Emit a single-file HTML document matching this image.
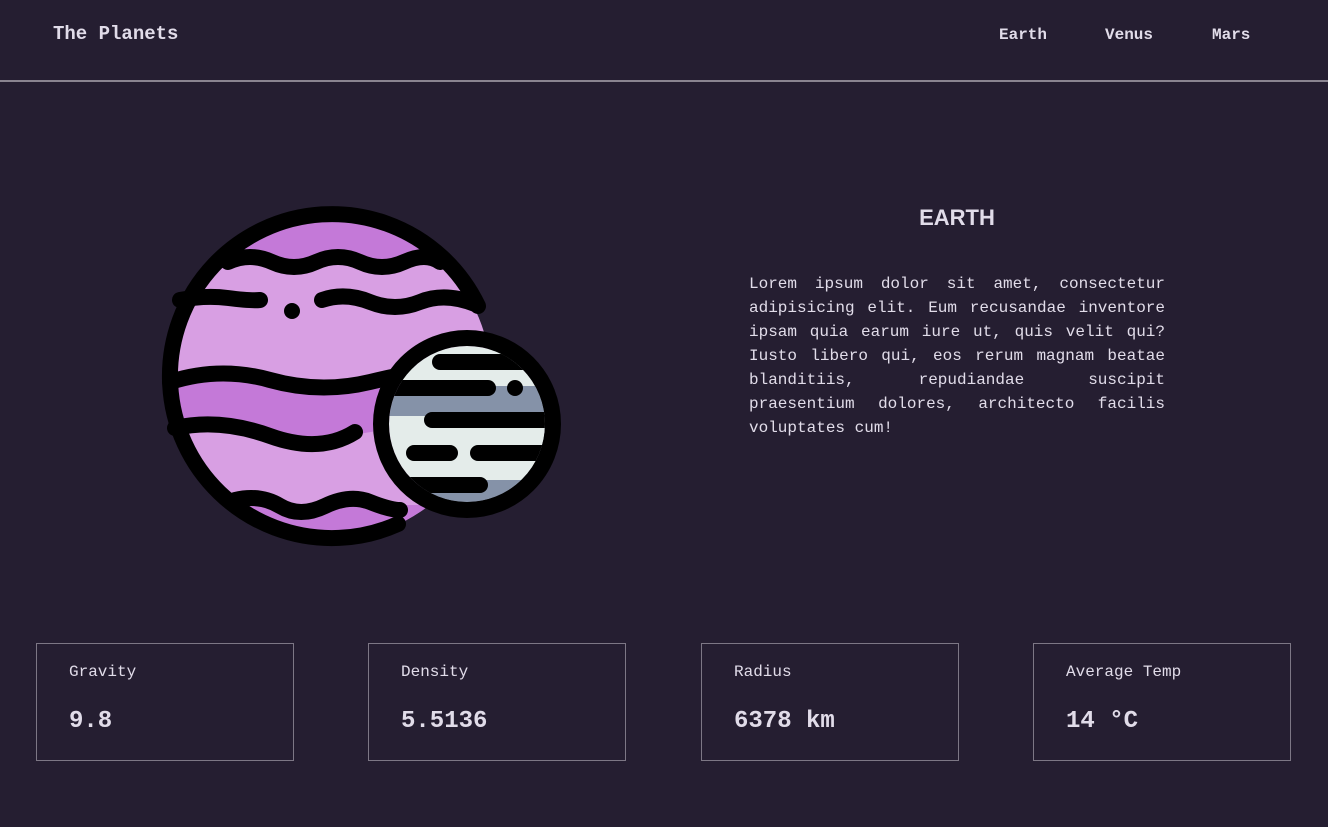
<!DOCTYPE html>
<html><head><meta charset="utf-8"><style>
*{margin:0;padding:0;box-sizing:border-box}
body{width:1328px;height:827px;background:#251e31;color:#e1dce9;font-family:"Liberation Mono",monospace;position:relative;overflow:hidden}
.logo{position:absolute;left:53px;top:23px;font-size:19px;font-weight:bold}
.nav a{position:absolute;top:26px;font-size:16px;font-weight:bold;color:#e1dce9;text-decoration:none}
.hr{position:absolute;left:0;top:80px;width:1328px;height:2px;background:#8a8490}
h1{position:absolute;left:749px;width:416px;text-align:center;top:205px;font-size:22px;font-family:"Liberation Sans",sans-serif;font-weight:bold}
p{position:absolute;left:749px;top:272px;width:416px;font-size:16px;line-height:24px;text-align:justify}
.box{position:absolute;top:643px;width:258px;height:118px;border:1px solid #7d7785}
.box .l{position:absolute;left:32px;top:19px;font-size:16px}
.box .v{position:absolute;left:32px;top:64px;font-size:24px;font-weight:bold}
</style></head><body>
<div class="logo">The Planets</div>
<div class="nav"><a style="left:999px">Earth</a><a style="left:1105px">Venus</a><a style="left:1212px">Mars</a></div>
<div class="hr"></div>
<svg style="position:absolute;left:150px;top:200px" width="420" height="360" viewBox="0 0 420 360">
<defs><clipPath id="c1"><circle cx="181" cy="179" r="160"/></clipPath><clipPath id="c2"><circle cx="317" cy="224" r="78"/></clipPath></defs>
<g clip-path="url(#c1)">
<rect x="0" y="0" width="420" height="360" fill="#d89fe3"/>
<rect x="0" y="0" width="420" height="62" fill="#c479d8"/>
<path d="M0 180 Q60 168 120 182 T240 180 T330 180 L330 232 Q260 222 200 236 T60 228 L0 232Z" fill="#c479d8"/>
<rect x="0" y="305" width="420" height="60" fill="#c479d8"/>
</g>
<g fill="none" stroke="#000" stroke-width="16" stroke-linecap="round">
<path d="M328 106 A162 162 0 1 0 248 324"/>
<path d="M78 62 Q100 52 122 62 T166 62 T210 62 T254 62 T290 62"/>
<path d="M30 100 Q55 95 78 98 T110 100"/>
<path d="M172 100 Q195 92 220 102 T270 102 T325 104"/>
<path d="M20 182 Q70 166 120 180 T220 182 T260 176"/>
<path d="M25 228 Q70 218 120 236 T205 232"/>
<path d="M85 300 Q110 294 130 306 T175 306 T220 302 T250 310"/>
</g>
<circle cx="142" cy="111" r="8" fill="#000"/>
<g clip-path="url(#c2)">
<rect x="230" y="140" width="180" height="180" fill="#e4ecea"/>
<rect x="230" y="186" width="180" height="30" fill="#8592a8"/>
<rect x="230" y="280" width="180" height="30" fill="#8592a8"/>
</g>
<circle cx="317" cy="224" r="86" fill="none" stroke="#000" stroke-width="16"/>
<g clip-path="url(#c2)" stroke="#000" stroke-width="16" stroke-linecap="round" fill="none">
<path d="M290 162 H420"/>
<path d="M220 188 H338"/>
<path d="M282 220 H420"/>
<path d="M264 253 H300"/>
<path d="M328 253 H420"/>
<path d="M230 285 H330"/>
</g>
<circle cx="365" cy="188" r="8" fill="#000"/>
</svg>
<h1>EARTH</h1>
<p>Lorem ipsum dolor sit amet, consectetur adipisicing elit. Eum recusandae inventore ipsam quia earum iure ut, quis velit qui? Iusto libero qui, eos rerum magnam beatae blanditiis, repudiandae suscipit praesentium dolores, architecto facilis voluptates cum!</p>
<div class="box" style="left:36px"><div class="l">Gravity</div><div class="v">9.8</div></div>
<div class="box" style="left:368px"><div class="l">Density</div><div class="v">5.5136</div></div>
<div class="box" style="left:701px"><div class="l">Radius</div><div class="v">6378 km</div></div>
<div class="box" style="left:1033px"><div class="l">Average Temp</div><div class="v">14 °C</div></div>
</body></html>
